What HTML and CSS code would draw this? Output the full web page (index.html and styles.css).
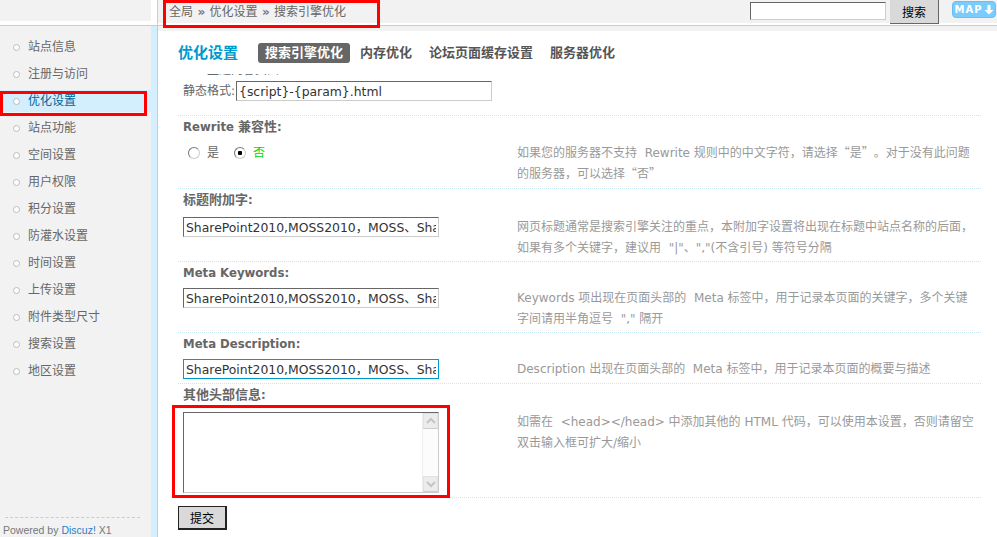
FILE: index.html
```html
<!DOCTYPE html>
<html lang="zh">
<head>
<meta charset="utf-8">
<title>搜索引擎优化</title>
<link rel="stylesheet" href="styles.css">
</head>
<body>
<div class="page">
  <header class="top">
    <div class="brand"><span class="brand-text">Control Panel</span></div>
    <div class="topbar">
      <nav class="crumbs">全局<span class="sep">»</span>优化设置<span class="sep">»</span>搜索引擎优化</nav>
      <div class="top-tools">
        <input class="search-input" type="text">
        <button class="btn search-btn" type="button">搜索</button>
        <a class="map-btn">MAP<svg class="map-arrow" viewBox="0 0 10 10" width="10" height="10"><path d="M3.500 0h3v5H9.500L5 9.500.5 5h3z" fill="#fff"/></svg></a>
      </div>
    </div>
  </header>
  <div class="body">
    <aside class="side">
      <ul class="menu">
        <li class="menu-item"><i class="dot"></i>站点信息</li>
        <li class="menu-item"><i class="dot"></i>注册与访问</li>
        <li class="menu-item active"><i class="dot"></i>优化设置</li>
        <li class="menu-item"><i class="dot"></i>站点功能</li>
        <li class="menu-item"><i class="dot"></i>空间设置</li>
        <li class="menu-item"><i class="dot"></i>用户权限</li>
        <li class="menu-item"><i class="dot"></i>积分设置</li>
        <li class="menu-item"><i class="dot"></i>防灌水设置</li>
        <li class="menu-item"><i class="dot"></i>时间设置</li>
        <li class="menu-item"><i class="dot"></i>上传设置</li>
        <li class="menu-item"><i class="dot"></i>附件类型尺寸</li>
        <li class="menu-item"><i class="dot"></i>搜索设置</li>
        <li class="menu-item"><i class="dot"></i>地区设置</li>
      </ul>
      <div class="powered">Powered by <a class="powered-link">Discuz!</a> X1</div>
    </aside>
    <main class="main">
      <div class="tabs">
        <h2 class="tabs-title">优化设置</h2>
        <a class="tab current">搜索引擎优化</a>
        <a class="tab">内存优化</a>
        <a class="tab">论坛页面缓存设置</a>
        <a class="tab">服务器优化</a>
      </div>
      <div class="clip-line"><span>主题内容页面</span></div>
      <div class="static-row">
        <label class="static-label">静态格式:</label>
        <input class="field static-input" type="text" value="{script}-{param}.html">
      </div>
      <section class="row">
        <div class="row-label">Rewrite <span class="zh">兼容性</span>:</div>
        <div class="row-body gap-6 pad-3">
          <div class="radios">
            <label class="radio"><input type="radio" name="rw">是</label>
            <label class="radio on"><input type="radio" name="rw" checked>否</label>
          </div>
          <p class="desc">如果您的服务器不支持 &nbsp;Rewrite 规则中的中文字符，请选择<span class="q">“是”。</span>对于没有此问题<br>的服务器，可以选择<span class="q">“否”</span></p>
        </div>
      </section>
      <section class="row">
        <div class="row-label"><span class="zh">标题附加字</span>:</div>
        <div class="row-body gap-7 pad-2">
          <input class="field" type="text" value="SharePoint2010,MOSS2010，MOSS、SharePoint">
          <p class="desc">网页标题通常是搜索引擎关注的重点，本附加字设置将出现在标题中站点名称的后面，<br>如果有多个关键字，建议用 &nbsp;"|"、","(不含引号) 等符号分隔</p>
        </div>
      </section>
      <section class="row">
        <div class="row-label">Meta Keywords:</div>
        <div class="row-body gap-5 pad-2">
          <input class="field" type="text" value="SharePoint2010,MOSS2010，MOSS、SharePoint">
          <p class="desc">Keywords 项出现在页面头部的 &nbsp;Meta 标签中，用于记录本页面的关键字，多个关键<br>字间请用半角逗号 &nbsp;"," 隔开</p>
        </div>
      </section>
      <section class="row">
        <div class="row-label">Meta Description:</div>
        <div class="row-body gap-5 pad-3">
          <input class="field focused" type="text" value="SharePoint2010,MOSS2010，MOSS、SharePoint">
          <p class="desc">Description 出现在页面头部的 &nbsp;Meta 标签中，用于记录本页面的概要与描述</p>
        </div>
      </section>
      <section class="row row-last">
        <div class="row-label"><span class="zh">其他头部信息</span>:</div>
        <div class="row-body gap-7 pad-4">
          <div class="area">
            <textarea class="area-text"></textarea>
            <div class="scroll">
              <span class="scroll-btn"><svg viewBox="0 0 12 8" width="12" height="8"><path d="M2 6l4-4 4 4" fill="none" stroke="#c4c4c4" stroke-width="2"/></svg></span>
              <span class="scroll-btn"><svg viewBox="0 0 12 8" width="12" height="8"><path d="M2 2l4 4 4-4" fill="none" stroke="#c4c4c4" stroke-width="2"/></svg></span>
            </div>
          </div>
          <p class="desc">如需在 &nbsp;&lt;head&gt;&lt;/head&gt; 中添加其他的&nbsp;HTML 代码，可以使用本设置，否则请留空<br>双击输入框可扩大/缩小</p>
        </div>
      </section>
      <button class="btn submit" type="button">提交</button>
    </main>
  </div>
</div>
<div class="mark mark-crumb"></div>
<div class="mark mark-menu"></div>
<div class="mark mark-area"></div>
</body>
</html>
```
FILE: styles.css
```css
* { box-sizing: border-box; }
html, body { margin: 0; padding: 0; height: 100%; overflow: hidden; background: #fff; }
body { font: 12px/20px "DejaVu Sans", "Noto Sans CJK SC", sans-serif; color: #666; position: relative; }
.page { display: flex; flex-direction: column; height: 537px; }

/* top */
.top { display: flex; height: 26px; border-bottom: 1px solid #ccc; flex: none; }
.brand { width: 151px; height: 21px; background: #f2f2f2; overflow: hidden; margin-right: 6px; }
.brand-text { display: block; margin: -13px 0 0 27px; font-size: 14px; line-height: 16px; font-weight: bold; color: #bbb; }
.topbar { flex: 1; height: 25px; border-left: 1px solid #ccc; background: linear-gradient(to bottom, #f2f2f2 23px, #fff 23px); display: flex; justify-content: space-between; }
.crumbs { padding-left: 11px; height: 23px; line-height: 24px; color: #666; flex: none; }
.sep { display: inline-block; width: 16.500px; text-align: center; color: #778; font-size: 12px; font-weight: bold; line-height: 1; }
.top-tools { display: flex; align-items: flex-start; padding-right: 1px; }
.search-input { width: 136px; height: 18px; margin: 2px 4px 0 0; padding: 0; background: #fff; border: 1px solid #ccc; border-top-color: #666; border-left-color: #666; }
.btn { font: 12px/20px "Noto Sans CJK SC", sans-serif; color: #000; background: #d9d9d9; padding: 0; cursor: pointer; }
.search-btn { width: 49px; height: 24px; margin-right: 13px; border: 0; border-right: 1px solid #666; border-bottom: 1px solid #666; }
.map-btn { width: 44px; height: 17px; margin-top: 1px; border-radius: 4px; background: #7accff; border: 1px solid #66bdfb; color: #fff; font: bold 10px/15px "DejaVu Sans", sans-serif; letter-spacing: 1px; display: flex; align-items: center; justify-content: center; }
.map-arrow { margin-left: 1px; }

/* layout */
.body { flex: 1; display: flex; min-height: 0; }
.side { width: 158px; flex: none; background: #f2f2f2; border-right: 1px solid #ccc; box-shadow: inset -6px 0 0 #d3eefc; position: relative; padding-top: 10px; }
.menu { list-style: none; margin: 0; padding: 0; }
.menu-item { height: 22px; line-height: 22px; margin-bottom: 5px; padding-left: 13px; display: flex; align-items: center; width: 157px; color: #666; }
.menu-item.active { background: #d3eefc; color: #069; }
.dot { width: 7px; height: 7px; border: 1px solid #bbb; border-radius: 50%; background: #fff; margin-right: 8px; flex: none; }
.powered { position: absolute; left: 0; bottom: 0; width: 151px; height: 20px; padding-left: 3px; font: 10.500px/16px "Liberation Sans", sans-serif; color: #777; white-space: nowrap; }
.powered::before { content: ""; display: block; width: 135px; margin-left: 2px; border-top: 1px dashed #ccc; height: 4px; }
.powered-link { color: #2a7fc9; }

/* main */
.main { flex: 1; min-width: 0; padding: 0 16px 0 20px; border-top: 5px solid #f2f2f2; }
.tabs { display: flex; align-items: center; height: 20px; margin-top: 12px; }
.tabs-title { margin: 0 20px 0 0; font: bold 15px/18px "Noto Sans CJK SC", sans-serif; height: 20px; color: #09c; width: 60px; flex: none; }
.tab { font: bold 13px/18px "Noto Sans CJK SC", sans-serif; height: 20px; color: #555; padding: 0 7px; margin-right: 3px; border-radius: 3px; }
.tab.current { background: #666; color: #fff; }
.clip-line { height: 3px; margin-top: 11px; overflow: hidden; padding-left: 29px; }
.clip-line span { display: block; margin-top: -10px; font-size: 12px; line-height: 12px; }
.static-row { display: flex; align-items: center; height: 20px; margin-top: 4px; padding-left: 5px; margin-bottom: 14px; }
.static-label { width: 53px; flex: none; }
.row { border-top: 1px dotted #c5e8f8; padding-left: 5px; }
.row-last { border-bottom: 1px dotted #c5e8f8; }
.row-label { height: 21px; line-height: 23px; font-size: 11.7px; font-weight: bold; color: #666; }
.zh { font-size: 13px; line-height: 1; font-family: "Noto Sans CJK SC", sans-serif; }
.row-body { display: grid; grid-template-columns: 334px 1fr; align-items: start; }
.gap-5 { margin-top: 5px; } .gap-6 { margin-top: 6px; } .gap-7 { margin-top: 7px; }
.pad-2 { padding-bottom: 2px; } .pad-3 { padding-bottom: 3px; } .pad-4 { padding-bottom: 4px; }
.field { width: 256px; height: 20px; padding: 0 2px; font: 12.4px "DejaVu Sans", "Noto Sans CJK SC", sans-serif; color: #333; background: #fff; border: 1px solid #ccc; border-top-color: #666; border-left-color: #666; outline: none; }
.field.focused { border-color: #09c; }
.radios { display: flex; height: 20px; padding-left: 5px; }
.radio { display: flex; align-items: center; width: 46px; }
.radio input { appearance: none; width: 12px; height: 12px; margin: 0 7px 0 0; border: 1px solid #ccc; border-top-color: #777; border-left-color: #777; border-radius: 50%; background: #fff; display: block; }
.radio input:checked { background: radial-gradient(circle, #000 2px, #fff 2.5px); }
.radio.on { color: #00d800; }
.desc { margin: 0; color: #999; white-space: nowrap; font-size: 12px; line-height: 21px; }
.q { font-family: "Noto Sans CJK SC", sans-serif; line-height: 1; text-spacing-trim: space-all; }
.area { width: 256px; height: 81px; display: flex; border: 1px solid #ccc; border-top-color: #666; border-left-color: #666; }
.area-text { flex: 1; min-width: 0; border: 0; padding: 0; resize: none; outline: none; }
.scroll { width: 16px; flex: none; display: flex; flex-direction: column; justify-content: space-between; background: #fcfcfc; border-left: 1px solid #eee; }
.scroll-btn { height: 16px; background: #ececec; border: 1px solid #e2e2e2; border-bottom-color: #ccc; display: flex; align-items: center; justify-content: center; }
.submit { display: block; width: 49px; height: 24px; margin-top: 8px; border: 1px solid #222; border-bottom-width: 2px; border-right-width: 2px; }

/* annotation marks */
.mark { position: absolute; border: 3px solid #f00; pointer-events: none; }
.mark-crumb { left: 163px; top: 0; width: 217px; height: 28px; }
.mark-menu { left: 0; top: 91px; width: 147px; height: 25px; }
.mark-area { left: 172px; top: 405px; width: 278px; height: 93px; }
```
